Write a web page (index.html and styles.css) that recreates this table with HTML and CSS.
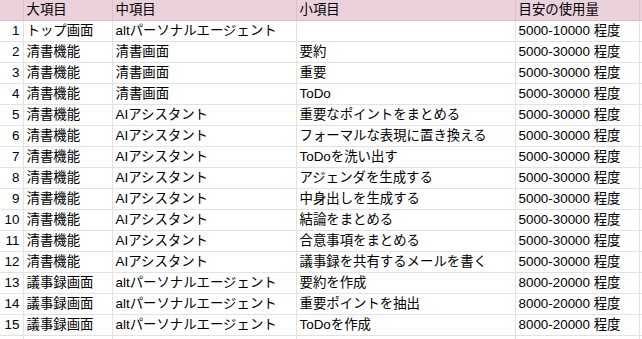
FILE: index.html
```html
<!DOCTYPE html>
<html lang="ja">
<head>
<meta charset="utf-8">
<link rel="stylesheet" href="styles.css">
</head>
<body>
<div class="frame">
<table class="sheet">
<colgroup>
<col class="c-num"><col class="c-a"><col class="c-b"><col class="c-c"><col class="c-d"><col class="c-e">
</colgroup>
<thead>
<tr class="head"><td></td><td>大項目</td><td>中項目</td><td>小項目</td><td>目安の使用量</td><td></td></tr>
</thead>
<tbody>
<tr><td class="num">1</td><td>トップ画面</td><td>altパーソナルエージェント</td><td></td><td>5000-10000 程度</td><td></td></tr>
<tr><td class="num">2</td><td>清書機能</td><td>清書画面</td><td>要約</td><td>5000-30000 程度</td><td></td></tr>
<tr><td class="num">3</td><td>清書機能</td><td>清書画面</td><td>重要</td><td>5000-30000 程度</td><td></td></tr>
<tr><td class="num">4</td><td>清書機能</td><td>清書画面</td><td>ToDo</td><td>5000-30000 程度</td><td></td></tr>
<tr><td class="num">5</td><td>清書機能</td><td>AIアシスタント</td><td>重要なポイントをまとめる</td><td>5000-30000 程度</td><td></td></tr>
<tr><td class="num">6</td><td>清書機能</td><td>AIアシスタント</td><td>フォーマルな表現に置き換える</td><td>5000-30000 程度</td><td></td></tr>
<tr><td class="num">7</td><td>清書機能</td><td>AIアシスタント</td><td>ToDoを洗い出す</td><td>5000-30000 程度</td><td></td></tr>
<tr><td class="num">8</td><td>清書機能</td><td>AIアシスタント</td><td>アジェンダを生成する</td><td>5000-30000 程度</td><td></td></tr>
<tr><td class="num">9</td><td>清書機能</td><td>AIアシスタント</td><td>中身出しを生成する</td><td>5000-30000 程度</td><td></td></tr>
<tr><td class="num">10</td><td>清書機能</td><td>AIアシスタント</td><td>結論をまとめる</td><td>5000-30000 程度</td><td></td></tr>
<tr><td class="num">11</td><td>清書機能</td><td>AIアシスタント</td><td>合意事項をまとめる</td><td>5000-30000 程度</td><td></td></tr>
<tr><td class="num">12</td><td>清書機能</td><td>AIアシスタント</td><td>議事録を共有するメールを書く</td><td>5000-30000 程度</td><td></td></tr>
<tr><td class="num">13</td><td>議事録画面</td><td>altパーソナルエージェント</td><td>要約を作成</td><td>8000-20000 程度</td><td></td></tr>
<tr><td class="num">14</td><td>議事録画面</td><td>altパーソナルエージェント</td><td>重要ポイントを抽出</td><td>8000-20000 程度</td><td></td></tr>
<tr><td class="num">15</td><td>議事録画面</td><td>altパーソナルエージェント</td><td>ToDoを作成</td><td>8000-20000 程度</td><td></td></tr>
<tr class="blank"><td></td><td></td><td></td><td></td><td></td><td></td></tr>
</tbody>
</table>
</div>
</body>
</html>
```
FILE: styles.css
```css
html, body {
  margin: 0;
  padding: 0;
  background: #ffffff;
}
.frame {
  width: 642px;
  height: 339px;
  overflow: hidden;
}
.sheet {
  border-collapse: collapse;
  table-layout: fixed;
  width: 680px;
  font-family: "Liberation Sans", "Noto Sans CJK JP", sans-serif;
  font-size: 13.4px;
  color: #000000;
}
.c-num { width: 23px; }
.c-a { width: 89px; }
.c-b { width: 184px; }
.c-c { width: 219px; }
.c-d { width: 124px; }
.c-e { width: 41px; }
.sheet td {
  height: 20px;
  padding: 0 3px;
  border: 1px solid #e2e2e2;
  white-space: nowrap;
  overflow: hidden;
  line-height: 18px;
  vertical-align: middle;
}
.sheet tr td:first-child {
  border-left: none;
}
.sheet .head td {
  background: #ead1dc;
  border-color: #d8c2cc;
  border-top: none;
}
.sheet .num {
  text-align: right;
  padding-right: 3px;
}
```
